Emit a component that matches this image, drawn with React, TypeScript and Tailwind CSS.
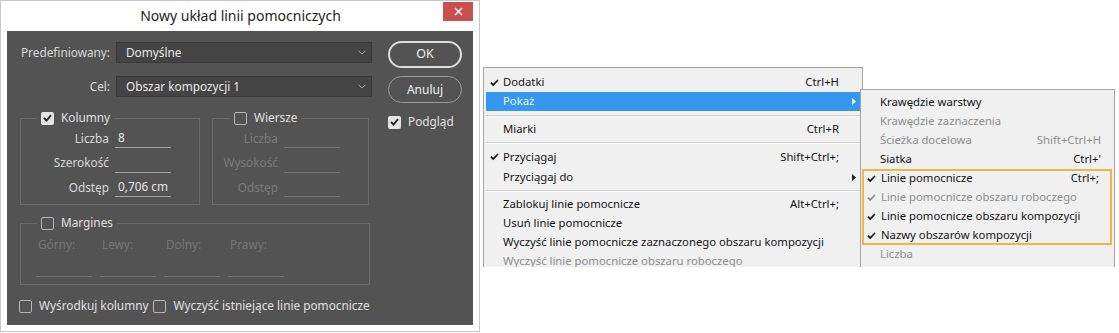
import React from "react";

const dlgFont = "font-['Noto_Sans',sans-serif]";
const menuFont = "font-['Noto_Sans',sans-serif]";

function DCheck({ checked }: { checked?: boolean }) {
  return checked ? (
    <span className="w-[13px] h-[13px] rounded-[2px] bg-[#e4e4e4] flex items-center justify-center shrink-0">
      <svg width="9" height="8" viewBox="0 0 9 8">
        <path d="M1 4 L3.5 6.5 L8 1.2" fill="none" stroke="#2a2a2a" strokeWidth="1.9" />
      </svg>
    </span>
  ) : (
    <span className="block w-[13px] h-[13px] rounded-[2px] border border-[#b5b5b5] shrink-0" />
  );
}

function Row({
  label,
  value,
  labelCls,
  disabled,
}: {
  label: string;
  value?: string;
  labelCls: string;
  disabled?: boolean;
}) {
  return (
    <div className="flex items-center h-[19px]">
      <div className={labelCls + (disabled ? " text-[#7b7b7b]" : " text-[#d8d8d8]")}>{label}</div>
      <div
        className={
          "ml-[6px] w-[56px] h-[19px] border-b flex items-center pl-[3px] text-[#e6e6e6] " +
          (disabled ? "border-[#757575]" : "border-[#a5a5a5]")
        }
      >
        {value}
      </div>
    </div>
  );
}

function Select({ label, value }: { label: string; value: string }) {
  return (
    <div className="flex items-center h-[21px]">
      <div className="w-[103px] text-right text-[#d8d8d8]">{label}</div>
      <div className="ml-[6px] w-[256px] h-[21px] bg-[#444444] border border-[#3a3a3a] flex items-center justify-between pl-[9px] pr-[5px] text-[#e8e8e8]">
        <span>{value}</span>
        <svg width="8" height="5" viewBox="0 0 8 5">
          <path d="M0.5 0.8 L4 4 L7.5 0.8" fill="none" stroke="#a8a8a8" strokeWidth="1" />
        </svg>
      </div>
    </div>
  );
}

function Dialog() {
  return (
    <div className={"w-[480px] h-[332px] bg-white border border-[#c8c8c8] flex flex-col shrink-0 " + dlgFont}>
      <div className="h-[30px] flex items-start">
        <div className="w-[36px]" />
        <div className="flex-1 text-center text-[14px] leading-[30px] text-[#1e1e1e] pl-[1px]">
          Nowy układ linii pomocniczych
        </div>
        <div className="w-[30px] h-[19px] mt-[1px] mr-[6px] bg-[#c75050] flex items-center justify-center">
          <svg width="9" height="9" viewBox="0 0 9 9">
            <path d="M1 1 L8 8 M8 1 L1 8" stroke="#ffffff" strokeWidth="1.4" />
          </svg>
        </div>
      </div>
      <div className="mx-[6px] h-[294px] bg-[#535353] text-[11.8px] flex flex-col">
        <div className="flex">
          <div className="w-[365px] flex flex-col">
            <div className="pt-[11px]">
              <Select label="Predefiniowany:" value="Domyślne" />
            </div>
            <div className="mt-[13px]">
              <Select label="Cel:" value="Obszar kompozycji 1" />
            </div>
            <div className="mt-[14px] ml-[13px] flex gap-[12px]">
              <fieldset className="w-[180px] border border-[#6a6a6a] pb-[7px]">
                <legend className="ml-[16px] px-[4px]">
                  <div className="flex items-center gap-[7px] h-[14px] text-[#e0e0e0]">
                    <DCheck checked />
                    <span>Kolumny</span>
                  </div>
                </legend>
                <div className="pt-[4px] flex flex-col gap-[5.5px]">
                  <Row label="Liczba" value="8" labelCls="w-[88px] text-right" />
                  <Row label="Szerokość" labelCls="w-[88px] text-right" />
                  <Row label="Odstęp" value="0,706 cm" labelCls="w-[88px] text-right" />
                </div>
              </fieldset>
              <fieldset className="w-[157px] border border-[#6a6a6a] pb-[7px]">
                <legend className="ml-[17px] px-[4px]">
                  <div className="flex items-center gap-[7px] h-[14px] text-[#e0e0e0]">
                    <DCheck />
                    <span>Wiersze</span>
                  </div>
                </legend>
                <div className="pt-[4px] flex flex-col gap-[5.5px]">
                  <Row label="Liczba" labelCls="w-[65px] text-right" disabled />
                  <Row label="Wysokość" labelCls="w-[65px] text-right" disabled />
                  <Row label="Odstęp" labelCls="w-[65px] text-right" disabled />
                </div>
              </fieldset>
            </div>
          </div>
          <div className="ml-[16px] pt-[10px] flex flex-col text-[#f0f0f0]">
            <div className="w-[74px] h-[27px] rounded-full border-2 border-[#dcdcdc] flex items-center justify-center text-[12.5px]">
              OK
            </div>
            <div className="mt-[8px] w-[74px] h-[27px] rounded-full border border-[#9a9a9a] flex items-center justify-center text-[12px]">
              Anuluj
            </div>
            <div className="mt-[12px] flex items-center gap-[7px] h-[14px] text-[#e0e0e0]">
              <DCheck checked />
              <span>Podgląd</span>
            </div>
          </div>
        </div>
        <fieldset className="mt-[11px] ml-[13px] w-[350px] border border-[#6a6a6a] pb-[7px]">
          <legend className="ml-[16px] px-[4px]">
            <div className="flex items-center gap-[7px] h-[14px] text-[#e0e0e0]">
              <DCheck />
              <span>Margines</span>
            </div>
          </legend>
          <div className="pt-[6px] pl-[15px] flex gap-[8px]">
            {["Górny:", "Lewy:", "Dolny:", "Prawy:"].map((l) => (
              <div key={l} className="w-[56px] flex flex-col">
                <div className="h-[16px] pl-[2px] text-[#767676] leading-[16px]">{l}</div>
                <div className="mt-[6px] h-[19px] border-b border-[#727272]" />
              </div>
            ))}
          </div>
        </fieldset>
        <div className="mt-[13px] ml-[12px] flex items-center h-[16px] text-[#e0e0e0]">
          <DCheck />
          <span className="ml-[7px] whitespace-nowrap">Wyśrodkuj kolumny</span>
          <div className="ml-[5px] flex">
            <DCheck />
          </div>
          <span className="ml-[7px] whitespace-nowrap">Wyczyść istniejące linie pomocnicze</span>
        </div>
      </div>
    </div>
  );
}

function Tick({ color = "#111" }: { color?: string }) {
  return (
    <svg width="9" height="8" viewBox="0 0 9 8">
      <path d="M0.3 4.3 L1.6 3.1 L3.2 4.8 L7.4 0.4 L8.6 1.6 L3.2 7.2 Z" fill={color} />
    </svg>
  );
}

function Arrow({ color = "#222" }: { color?: string }) {
  return (
    <svg width="4" height="7" viewBox="0 0 4 7">
      <path d="M0 0 L4 3.5 L0 7 Z" fill={color} />
    </svg>
  );
}

type Item = {
  t: string;
  k?: string;
  check?: boolean;
  dis?: boolean;
  arrow?: boolean;
  hi?: boolean;
  h: string;
};

function MItem({ it, main }: { it: Item; main?: boolean }) {
  const txt = it.hi ? "text-[#eaf3ff]" : it.dis ? "text-[#8d8d8d]" : "text-[#141414]";
  return (
    <div
      className={
        it.h +
        " flex items-center " +
        (main ? "mx-[2px] pl-[4px] pr-[4px] " : "pl-[5px] pr-[13px] ") +
        (it.hi ? "bg-[#3597f0] " : "") +
        txt
      }
    >
      <div className={main ? "w-[13px] flex items-center" : "w-[14px] flex items-center"}>
        {it.check && <Tick color={it.dis ? "#8d8d8d" : "#111"} />}
      </div>
      <div className="flex-1 whitespace-nowrap">{it.t}</div>
      {it.k && <div className={"whitespace-nowrap " + (main ? "mr-[11px]" : "")}>{it.k}</div>}
      {main && (
        <div className="w-[6px] flex justify-end">
          {it.arrow && <Arrow color={it.hi ? "#e8f2ff" : "#222"} />}
        </div>
      )}
    </div>
  );
}

function Sep({ h }: { h: string }) {
  return (
    <div className={h + " mx-[2px] flex flex-col justify-center"}>
      <div className="h-[1px] bg-[#cfcfcf]" />
      <div className="h-[1px] bg-[#fbfbfb]" />
    </div>
  );
}

function Menus() {
  return (
    <div className={"ml-[3px] flex items-start text-[11.3px] " + menuFont}>
      <div className="mt-[67px] w-[380px] h-[200px] overflow-hidden bg-[#f0f0f0] border-l border-t border-r border-[#a5a5a5] pt-[5px]">
        <MItem main it={{ t: "Dodatki", k: "Ctrl+H", check: true, h: "h-[19px]" }} />
        <MItem main it={{ t: "Pokaż", arrow: true, hi: true, h: "h-[19px]" }} />
        <Sep h="h-[9px]" />
        <MItem main it={{ t: "Miarki", k: "Ctrl+R", h: "h-[19px]" }} />
        <Sep h="h-[8px]" />
        <MItem main it={{ t: "Przyciągaj", k: "Shift+Ctrl+;", check: true, h: "h-[20px]" }} />
        <MItem main it={{ t: "Przyciągaj do", arrow: true, h: "h-[20px]" }} />
        <Sep h="h-[8px]" />
        <MItem main it={{ t: "Zablokuj linie pomocnicze", k: "Alt+Ctrl+;", h: "h-[19px]" }} />
        <MItem main it={{ t: "Usuń linie pomocnicze", h: "h-[19px]" }} />
        <MItem main it={{ t: "Wyczyść linie pomocnicze zaznaczonego obszaru kompozycji", h: "h-[19px]" }} />
        <MItem main it={{ t: "Wyczyść linie pomocnicze obszaru roboczego", dis: true, h: "h-[19px]" }} />
      </div>
      <div className="mt-[89px] -ml-[3px] w-[255px] h-[178px] overflow-hidden bg-[#f0f0f0] border-l border-t border-r border-[#a5a5a5] pt-[3px] relative z-10">
        <MItem it={{ t: "Krawędzie warstwy", h: "h-[19px]" }} />
        <MItem it={{ t: "Krawędzie zaznaczenia", dis: true, h: "h-[19px]" }} />
        <MItem it={{ t: "Ścieżka docelowa", k: "Shift+Ctrl+H", dis: true, h: "h-[19px]" }} />
        <MItem it={{ t: "Siatka", k: "Ctrl+'", h: "h-[19px]" }} />
        <div className="ml-[1px] mr-[2px] ring-2 ring-inset ring-[#f2b445]">
          <MItem it={{ t: "Linie pomocnicze", k: "Ctrl+;", check: true, h: "h-[19px]" }} />
          <MItem it={{ t: "Linie pomocnicze obszaru roboczego", check: true, dis: true, h: "h-[19px]" }} />
          <MItem it={{ t: "Linie pomocnicze obszaru kompozycji", check: true, h: "h-[19px]" }} />
          <MItem it={{ t: "Nazwy obszarów kompozycji", check: true, h: "h-[19px]" }} />
        </div>
        <MItem it={{ t: "Liczba", dis: true, h: "h-[19px]" }} />
      </div>
    </div>
  );
}

export default function App() {
  return (
    <div className="w-[1119px] h-[333px] bg-white flex overflow-hidden">
      <Dialog />
      <Menus />
    </div>
  );
}
